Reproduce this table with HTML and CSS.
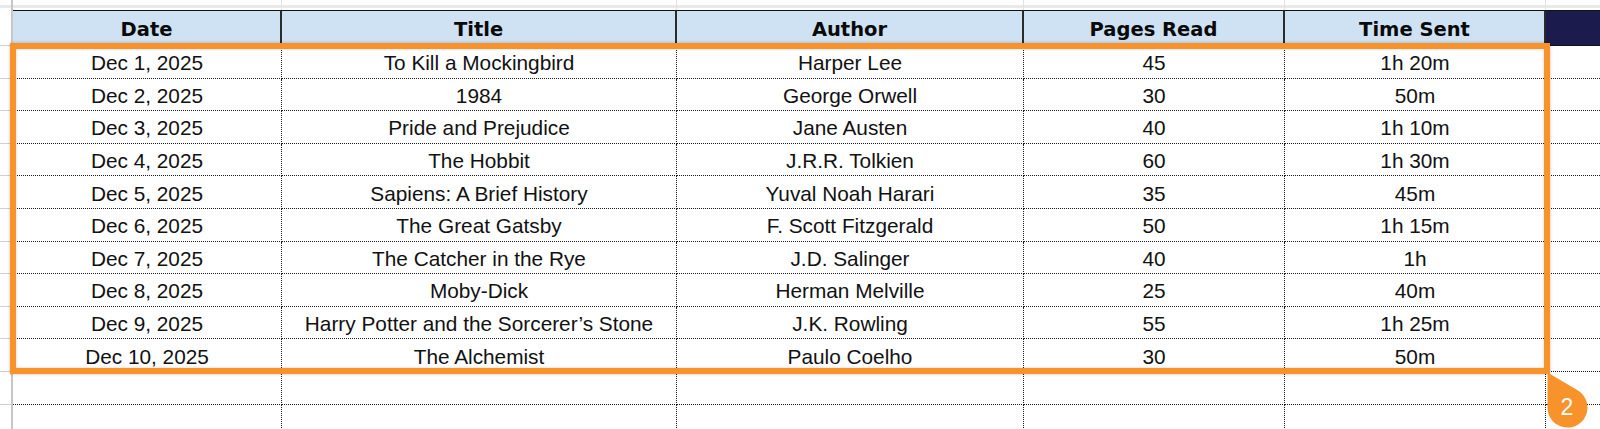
FILE: index.html
```html
<!DOCTYPE html>
<html>
<head>
<meta charset="utf-8">
<link rel="stylesheet" href="styles.css">
</head>
<body>
<div class="sheet">
  <div class="strip gut"></div><div class="strip"></div><div class="strip"></div><div class="strip"></div><div class="strip"></div><div class="strip"></div><div class="strip last"></div>

  <div class="gut"></div>
  <div class="hd">Date</div><div class="hd">Title</div><div class="hd">Author</div><div class="hd">Pages Read</div><div class="hd">Time Sent</div><div class="hd navy"></div>

  <div class="gut"></div><div class="c">Dec 1, 2025</div><div class="c">To Kill a Mockingbird</div><div class="c">Harper Lee</div><div class="c">45</div><div class="c">1h 20m</div><div class="c last"></div>
  <div class="gut"></div><div class="c">Dec 2, 2025</div><div class="c">1984</div><div class="c">George Orwell</div><div class="c">30</div><div class="c">50m</div><div class="c last"></div>
  <div class="gut"></div><div class="c">Dec 3, 2025</div><div class="c">Pride and Prejudice</div><div class="c">Jane Austen</div><div class="c">40</div><div class="c">1h 10m</div><div class="c last"></div>
  <div class="gut"></div><div class="c">Dec 4, 2025</div><div class="c">The Hobbit</div><div class="c">J.R.R. Tolkien</div><div class="c">60</div><div class="c">1h 30m</div><div class="c last"></div>
  <div class="gut"></div><div class="c">Dec 5, 2025</div><div class="c">Sapiens: A Brief History</div><div class="c">Yuval Noah Harari</div><div class="c">35</div><div class="c">45m</div><div class="c last"></div>
  <div class="gut"></div><div class="c">Dec 6, 2025</div><div class="c">The Great Gatsby</div><div class="c">F. Scott Fitzgerald</div><div class="c">50</div><div class="c">1h 15m</div><div class="c last"></div>
  <div class="gut"></div><div class="c">Dec 7, 2025</div><div class="c">The Catcher in the Rye</div><div class="c">J.D. Salinger</div><div class="c">40</div><div class="c">1h</div><div class="c last"></div>
  <div class="gut"></div><div class="c">Dec 8, 2025</div><div class="c">Moby-Dick</div><div class="c">Herman Melville</div><div class="c">25</div><div class="c">40m</div><div class="c last"></div>
  <div class="gut"></div><div class="c">Dec 9, 2025</div><div class="c">Harry Potter and the Sorcerer’s Stone</div><div class="c">J.K. Rowling</div><div class="c">55</div><div class="c">1h 25m</div><div class="c last"></div>
  <div class="gut"></div><div class="c">Dec 10, 2025</div><div class="c">The Alchemist</div><div class="c">Paulo Coelho</div><div class="c">30</div><div class="c">50m</div><div class="c last"></div>

  <div class="gut"></div><div class="c"></div><div class="c"></div><div class="c"></div><div class="c"></div><div class="c"></div><div class="c last"></div>
  <div class="gut"></div><div class="c"></div><div class="c"></div><div class="c"></div><div class="c"></div><div class="c"></div><div class="c last"></div>

  <div class="frame"></div>
  <div class="badge">
    <svg width="42" height="58" viewBox="0 0 42 58"><path d="M0.5,0.5 L30.6,18.3 A20,20 0 1 1 0.5,35.5 Z" fill="#f8922a"/></svg>
    <span class="num">2</span>
  </div>
</div>
</body>
</html>
```

FILE: styles.css
```css
html, body {
  margin: 0;
  padding: 0;
  background: #ffffff;
  overflow: hidden;
}

.sheet {
  position: relative;
  display: grid;
  grid-template-columns: 13px 269px 395px 347px 261px 261px 60px;
  grid-template-rows: 10px 36px repeat(10, 32.6px) 33px 33px;
  font-family: "Liberation Sans", Arial, sans-serif;
  color: #111;
}

.strip {
  border-right: 1px solid #e2e2e2;
  background: linear-gradient(to bottom, transparent 5px, #e9e9e9 5px, #e9e9e9 8px, transparent 8px);
}

.strip.last {
  border-right: none;
}

.gut {
  box-sizing: border-box;
  border-right: 2px solid #c6c6c6;
  border-bottom: 1px solid #cfcfcf;
}

.strip.gut {
  border-bottom: none;
}

.hd {
  box-sizing: border-box;
  background: #cfe2f3;
  border-top: 1px solid #111;
  border-bottom: 1px solid #111;
  border-right: 2px solid #2b2b2b;
  display: flex;
  align-items: center;
  justify-content: center;
  font-family: "DejaVu Sans", "Liberation Sans", sans-serif;
  font-weight: bold;
  font-size: 19.5px;
  color: #0a0a0a;
  padding-top: 2px;
}

.hd.navy {
  background: #1b1b4e;
  border-right: none;
}

.c {
  box-sizing: border-box;
  border-right: 1px dotted #1a1a1a;
  border-bottom: 1px dotted #1a1a1a;
  display: flex;
  align-items: center;
  justify-content: center;
  font-size: 20.8px;
  white-space: nowrap;
  padding-top: 3px;
}

.c.last {
  border-right: none;
}

.frame {
  position: absolute;
  left: 10px;
  top: 43px;
  width: 1540px;
  height: 331px;
  box-sizing: border-box;
  border: 6px solid #f8922a;
  box-shadow: 0 0 3px rgba(0, 0, 0, 0.25), inset 0 0 3px rgba(0, 0, 0, 0.2);
  pointer-events: none;
}

.badge {
  position: absolute;
  left: 1547px;
  top: 372px;
  width: 42px;
  height: 58px;
}

.badge svg {
  display: block;
}

.num {
  position: absolute;
  left: 0;
  top: 22px;
  width: 40px;
  text-align: center;
  color: #ffffff;
  font-family: "Liberation Sans", Arial, sans-serif;
  font-size: 23px;
  line-height: 26px;
}
```
